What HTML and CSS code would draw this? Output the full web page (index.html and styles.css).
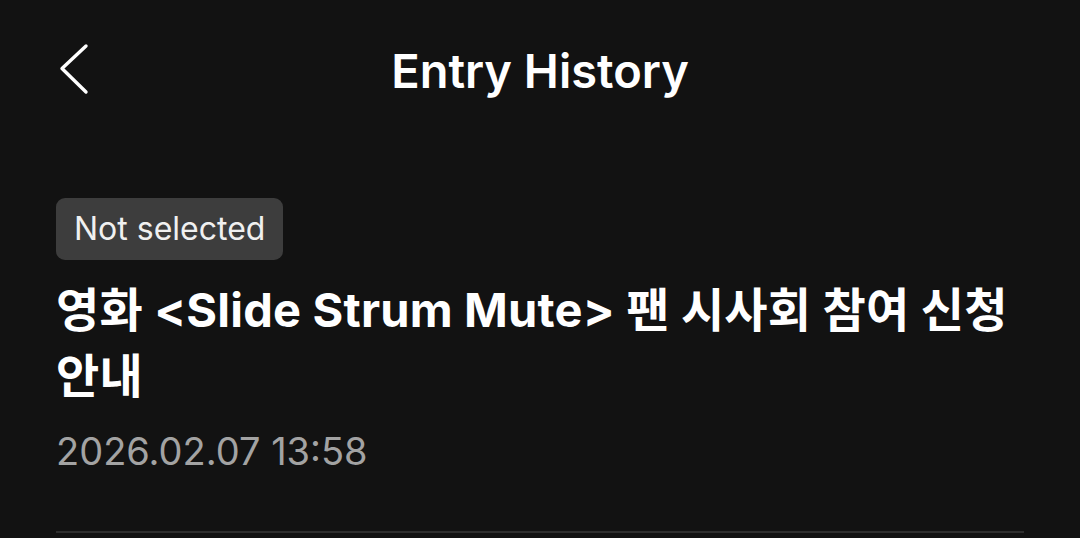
FILE: index.html
```html
<!DOCTYPE html>
<html lang="ko">
<head>
    <meta charset="UTF-8">
    <meta name="viewport" content="width=device-width, initial-scale=1.0">
    <title>Entry History</title>
    <link rel="stylesheet" href="styles.css">
</head>
<body>
<div class="header">
    <button class="back" aria-label="뒤로">
        <svg width="34" height="54" viewBox="0 0 34 54">
            <polyline points="28,3 4,25.5 28,49" fill="none" stroke="#fff" stroke-width="3.4" stroke-linecap="round" stroke-linejoin="round"/>
        </svg>
    </button>
    <h1>Entry History</h1>
    <span></span>
</div>

<div class="content">
    <span class="badge">Not selected</span>
    <h2 class="title">영화 &lt;Slide Strum Mute&gt; 팬 시사회 참여 신청 안내</h2>
    <p class="date">2026.02.07 13:58</p>
    <div class="divider"></div>
</div>
</body>
</html>
```

FILE: styles.css
```css
body {
    margin: 0;
    background-color: #121212;
    color: #fff;
    font-family: Inter, "Noto Sans CJK KR", sans-serif;
}

.header {
    display: grid;
    grid-template-columns: 1fr auto 1fr;
    align-items: center;
    height: 140px;
    padding: 0 56px;
}

.back {
    justify-self: start;
    background: none;
    border: none;
    padding: 0;
    display: flex;
    margin-left: 2px;
}

.header h1 {
    margin: 0;
    font-size: 47px;
    font-weight: 600;
}

.content {
    padding: 0 56px;
}

.badge {
    display: inline-block;
    margin-top: 58px;
    height: 62px;
    line-height: 62px;
    padding: 0 18px;
    background-color: #3d3d3d;
    border-radius: 9px;
    font-size: 32px;
    color: #f0f0f0;
}

.title {
    margin: 17px 0 0;
    font-size: 47px;
    line-height: 66px;
    font-weight: 700;
    letter-spacing: 0.2px;
}

.date {
    margin: 20px 0 0;
    font-size: 38px;
    line-height: 44px;
    color: #a3a3a3;
}

.divider {
    margin-top: 58px;
    height: 2px;
    background-color: #2e2e2e;
}
```
